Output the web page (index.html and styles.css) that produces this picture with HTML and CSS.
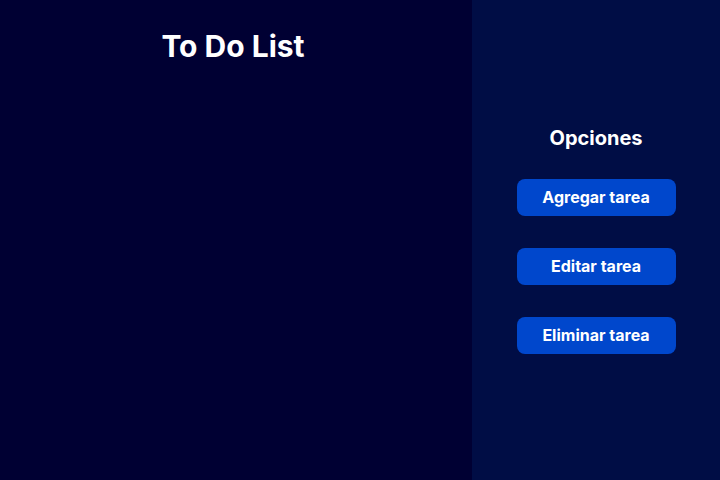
FILE: index.html
```html
<!DOCTYPE html>
<html lang="es">
<head>
<meta charset="utf-8">
<title>To Do List</title>
<link rel="stylesheet" href="styles.css">
</head>
<body>
<div class="app">
  <main class="main">
    <h1 class="title">To Do List</h1>
  </main>
  <aside class="side">
    <h2 class="side-title">Opciones</h2>
    <div class="actions">
      <button class="btn">Agregar tarea</button>
      <button class="btn">Editar tarea</button>
      <button class="btn">Eliminar tarea</button>
    </div>
  </aside>
</div>
</body>
</html>
```
FILE: styles.css
```css
* { box-sizing: border-box; }
html, body { margin: 0; padding: 0; height: 100%; }
body {
  font-family: Inter, "Noto Sans", sans-serif;
  color: #fff;
  background: #000033;
}
.app {
  display: flex;
  width: 720px;
  height: 480px;
}
.main {
  width: 472px;
  padding-right: 6px;
  background: #000033;
  display: flex;
  flex-direction: column;
  align-items: center;
}
.title {
  margin: 27px 0 0;
  font-size: 30px;
  font-weight: 700;
  line-height: 38px;
}
.side {
  flex: 1;
  background: #000d45;
  display: flex;
  flex-direction: column;
  align-items: center;
  padding-top: 124px;
}
.side-title {
  margin: 0;
  font-size: 20px;
  font-weight: 700;
  line-height: 28px;
}
.actions {
  display: flex;
  flex-direction: column;
  gap: 32px;
  margin-top: 27px;
}
.btn {
  width: 159px;
  height: 37px;
  padding: 0 0 2px;
  border: none;
  border-radius: 8px;
  background: #0047cc;
  color: #fff;
  font-family: Inter, "Noto Sans", sans-serif;
  font-size: 16px;
  font-weight: 700;
  cursor: pointer;
}
```
